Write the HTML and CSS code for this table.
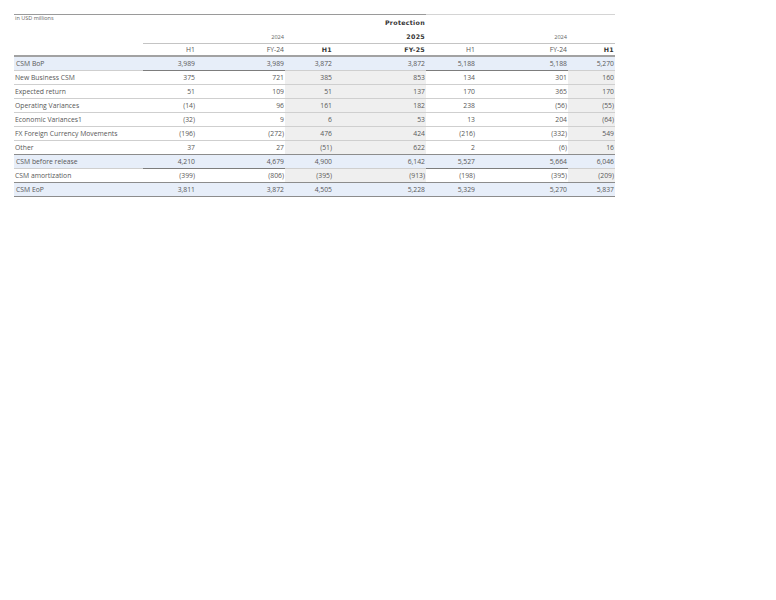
FILE: index.html
```html
<!DOCTYPE html>
<html>
<head>
<meta charset="utf-8">
<link rel="stylesheet" href="styles.css">
</head>
<body>
<table class="csm">
  <colgroup>
    <col class="w-label"><col class="w-c1"><col class="w-c2"><col class="w-c3"><col class="w-c4"><col class="w-c5"><col class="w-c6"><col class="w-c7">
  </colgroup>
  <thead>
    <tr class="hA">
      <th class="unit topd">in USD millions</th>
      <th class="topd"></th><th class="topd"></th><th class="topd"></th>
      <th class="topd bold">Protection</th>
      <th class="topl"></th><th class="topl"></th><th class="topl"></th>
    </tr>
    <tr class="hB">
      <th></th>
      <th class="bl"></th><th class="bl small">2024</th><th class="bl"></th><th class="bl bold">2025</th>
      <th class="bl"></th><th class="bl small">2024</th><th class="bl"></th>
    </tr>
    <tr class="hC">
      <th></th>
      <th>H1</th><th>FY-24</th><th class="bold">H1</th><th class="bold">FY-25</th>
      <th>H1</th><th>FY-24</th><th class="bold">H1</th>
    </tr>
  </thead>
  <tbody>
    <tr class="blue sub">
      <td class="lbl">CSM BoP</td><td class="w">3,989</td><td class="w">3,989</td><td>3,872</td><td>3,872</td><td class="w">5,188</td><td class="w">5,188</td><td>5,270</td>
    </tr>
    <tr>
      <td class="lbl">New Business CSM</td><td>375</td><td>721</td><td class="g">385</td><td class="g">853</td><td>134</td><td>301</td><td class="g">160</td>
    </tr>
    <tr>
      <td class="lbl">Expected return</td><td>51</td><td>109</td><td class="g">51</td><td class="g">137</td><td>170</td><td>365</td><td class="g">170</td>
    </tr>
    <tr>
      <td class="lbl">Operating Variances</td><td>(14)</td><td>96</td><td class="g">161</td><td class="g">182</td><td>238</td><td>(56)</td><td class="g">(55)</td>
    </tr>
    <tr>
      <td class="lbl">Economic Variances1</td><td>(32)</td><td>9</td><td class="g">6</td><td class="g">53</td><td>13</td><td>204</td><td class="g">(64)</td>
    </tr>
    <tr>
      <td class="lbl">FX Foreign Currency Movements</td><td>(196)</td><td>(272)</td><td class="g">476</td><td class="g">424</td><td>(216)</td><td>(332)</td><td class="g">549</td>
    </tr>
    <tr class="endd">
      <td class="lbl">Other</td><td>37</td><td>27</td><td class="g">(51)</td><td class="g">622</td><td>2</td><td>(6)</td><td class="g">16</td>
    </tr>
    <tr class="blue sub">
      <td class="lbl">CSM before release</td><td class="w">4,210</td><td class="w">4,679</td><td>4,900</td><td>6,142</td><td class="w">5,527</td><td class="w">5,664</td><td>6,046</td>
    </tr>
    <tr class="endd">
      <td class="lbl">CSM amortization</td><td>(399)</td><td>(806)</td><td class="g">(395)</td><td class="g">(913)</td><td>(198)</td><td>(395)</td><td class="g">(209)</td>
    </tr>
    <tr class="blue endd">
      <td class="lbl">CSM EoP</td><td>3,811</td><td>3,872</td><td>4,505</td><td>5,228</td><td>5,329</td><td>5,270</td><td>5,837</td>
    </tr>
  </tbody>
</table>
</body>
</html>
```
FILE: styles.css
```css
html, body {
  margin: 0;
  padding: 0;
  background: #ffffff;
}

.csm {
  margin: 14px 0 0 14px;
  border-collapse: collapse;
  table-layout: fixed;
  width: 601px;
  font-family: "Open Sans", "Liberation Sans", sans-serif;
  font-size: 6.8px;
  color: #585858;
}

.w-label { width: 129px; }
.w-c1 { width: 53px; }
.w-c2 { width: 89px; }
.w-c3 { width: 48px; }
.w-c4 { width: 93px; }
.w-c5 { width: 50px; }
.w-c6 { width: 92px; }
.w-c7 { width: 47px; }

.csm th, .csm td {
  padding: 0 1px 0 1px;
  text-align: right;
  font-weight: normal;
  white-space: nowrap;
  overflow: hidden;
  line-height: 8px;
}

.csm th.bold {
  font-family: "DejaVu Sans", sans-serif;
  font-weight: bold;
  font-size: 6.3px;
  color: #333333;
  letter-spacing: 0.3px;
}

.csm th.small {
  font-size: 5.6px;
  color: #666666;
}

.hA th {
  height: 15px;
  vertical-align: middle;
}

.hA th.topd { border-top: 1.5px solid #9a9a9a; }
.hA th.topl { border-top: 1.5px solid #d4d4d4; }

.hA th.unit {
  text-align: left;
  vertical-align: top;
  font-size: 5.5px;
  line-height: 6px;
  color: #666666;
  padding-top: 0;
}

.hB th {
  height: 13px;
  vertical-align: middle;
}

.hB th.bl { border-bottom: 1px solid #c4c4c4; }

.hC th {
  height: 11px;
  vertical-align: middle;
  border-bottom: 2px solid #a2a2a2;
}

.csm tbody td {
  height: 13px;
  vertical-align: middle;
  border-bottom: 1px solid #cfcfcf;
}

.csm td.lbl {
  text-align: left;
  padding-left: 1px;
}

.csm td.g { background: #efefef; }

.csm tr.blue td { background: #e7eef9; }
.csm tr.blue td.lbl { padding-left: 2px; }

.csm tr.sub td.w { border-bottom: 1px solid #7d7d7d; }

.csm tr.endd td { border-bottom: 1.5px solid #8c8c8c; }
```
